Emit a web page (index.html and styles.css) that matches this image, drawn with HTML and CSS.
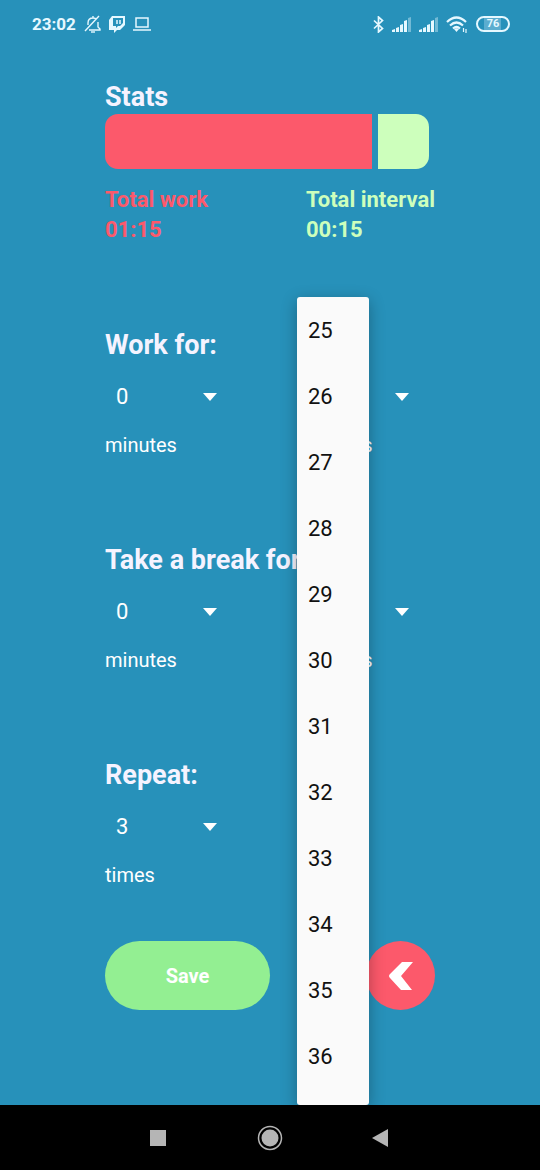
FILE: index.html
```html
<!DOCTYPE html>
<html lang="en">
<head>
<meta charset="utf-8">
<meta name="viewport" content="width=device-width, initial-scale=1">
<title>Interval timer</title>
<link rel="stylesheet" href="styles.css">
</head>
<body>
<div class="screen">
  <header class="status">
    <span class="clock">23:02</span>
    <svg width="17" height="18" viewBox="0 0 17 18" fill="none" stroke="currentColor" stroke-width="1.4" aria-hidden="true"><path d="M1 16 15 1M4 10V8c0-3 2-5 5-5 1 0 2 0 3 1M14 7v5l2 2v1H5M9 1v2"/><path d="M7 17h4"/></svg>
    <svg width="16" height="17" viewBox="0 0 16 17" aria-hidden="true"><path fill="currentColor" fill-rule="evenodd" d="M3 0h13v9l-5 5H8l-3 3v-3H0V4zM4 2v8h3v2l2-2h2l3-3V2z"/><path stroke="currentColor" stroke-width="1.5" d="M8 4v4M11 4v4"/></svg>
    <svg width="18" height="14" viewBox="0 0 18 14" fill="none" stroke="currentColor" stroke-width="1.5" aria-hidden="true"><path d="M3 1h12v9H3zM0 13h18"/></svg>
    <span class="spacer"></span>
    <svg width="11" height="17" viewBox="0 0 11 17" fill="none" stroke="currentColor" stroke-width="1.7" aria-hidden="true"><path d="m1 4.500 8.500 8L5.500 16V1l4 3.500-8.500 8"/></svg>
    <svg width="19" height="15" viewBox="0 0 19 15" fill="currentColor" aria-hidden="true"><path d="M0 13l3-1v3H0zM4 11l3-1v5H4zM8 8l3-1v8H8zM12 4l3-1v12h-3z"/><path opacity=".4" d="M16 1l3-1v15h-3z"/></svg>
    <svg width="19" height="15" viewBox="0 0 19 15" fill="currentColor" aria-hidden="true"><path d="M0 13l3-1v3H0zM4 11l3-1v5H4zM8 8l3-1v8H8zM12 4l3-1v12h-3z"/><path opacity=".4" d="M16 1l3-1v15h-3z"/></svg>
    <svg width="22" height="17" viewBox="0 0 22 17" fill="none" stroke="currentColor" stroke-width="2.2" aria-hidden="true"><path d="M1 6q9.500-9 19 0M4 9.500q6.500-6 13 0M7 12.500q3.500-3 7 0"/><path fill="currentColor" stroke="none" d="m8 13 2.500 3L13 13q-2.500-1.500-5 0"/><path stroke-width="1.200" d="M17.500 12v4M20 13v4"/></svg>
    <span class="battery">76</span>
  </header>

  <main class="content">
    <section>
      <h2 class="title">Stats</h2>
      <div class="bar"><div class="bar-work"></div><div class="bar-rest"></div></div>
      <dl class="legend">
        <div class="work"><dt>Total work</dt><dd>01:15</dd></div>
        <div class="rest"><dt>Total interval</dt><dd>00:15</dd></div>
      </dl>
    </section>

    <section>
      <h2 class="title">Work for:</h2>
      <div class="fields">
        <div class="field">
          <select class="picker" id="work-min"><option>0</option><option>1</option></select>
          <svg class="caret" width="14" height="8" viewBox="0 0 14 8" aria-hidden="true"><path fill="currentColor" d="M0 0h14L7 8z"/></svg>
          <label for="work-min">minutes</label>
        </div>
        <div class="field">
          <select class="picker" id="work-sec"><option>25</option><option>26</option></select>
          <svg class="caret" width="14" height="8" viewBox="0 0 14 8" aria-hidden="true"><path fill="currentColor" d="M0 0h14L7 8z"/></svg>
          <label for="work-sec">seconds</label>
        </div>
      </div>
    </section>

    <section>
      <h2 class="title">Take a break for:</h2>
      <div class="fields">
        <div class="field">
          <select class="picker" id="break-min"><option>0</option><option>1</option></select>
          <svg class="caret" width="14" height="8" viewBox="0 0 14 8" aria-hidden="true"><path fill="currentColor" d="M0 0h14L7 8z"/></svg>
          <label for="break-min">minutes</label>
        </div>
        <div class="field">
          <select class="picker" id="break-sec"><option>5</option><option>6</option></select>
          <svg class="caret" width="14" height="8" viewBox="0 0 14 8" aria-hidden="true"><path fill="currentColor" d="M0 0h14L7 8z"/></svg>
          <label for="break-sec">seconds</label>
        </div>
      </div>
    </section>

    <section>
      <h2 class="title">Repeat:</h2>
      <div class="fields">
        <div class="field">
          <select class="picker" id="repeat"><option>3</option><option>4</option></select>
          <svg class="caret" width="14" height="8" viewBox="0 0 14 8" aria-hidden="true"><path fill="currentColor" d="M0 0h14L7 8z"/></svg>
          <label for="repeat">times</label>
        </div>
      </div>
      <div class="actions">
        <button class="save" type="button">Save</button>
        <button class="back" type="button" aria-label="Back"><svg width="24" height="28" viewBox="0 0 24 28" aria-hidden="true"><path fill="currentColor" d="M13 0h11L12 14l11 14H12L1 16q-2-2 0-4z"/></svg></button>
      </div>
    </section>

    <div class="menu" role="listbox" aria-label="Seconds">
      <button class="item" type="button" role="option">25</button>
      <button class="item" type="button" role="option">26</button>
      <button class="item" type="button" role="option">27</button>
      <button class="item" type="button" role="option">28</button>
      <button class="item" type="button" role="option">29</button>
      <button class="item" type="button" role="option">30</button>
      <button class="item" type="button" role="option">31</button>
      <button class="item" type="button" role="option">32</button>
      <button class="item" type="button" role="option">33</button>
      <button class="item" type="button" role="option">34</button>
      <button class="item" type="button" role="option">35</button>
      <button class="item" type="button" role="option">36</button>
    </div>
  </main>

  <nav class="navbar">
    <button class="key" type="button" aria-label="Recent apps"><svg width="26" height="26" viewBox="0 0 26 26"><path fill="currentColor" d="M5 5h16v16H5z"/></svg></button>
    <button class="key" type="button" aria-label="Home"><svg width="26" height="26" viewBox="0 0 26 26"><circle cx="13" cy="13" r="11.500" fill="none" stroke="currentColor" stroke-width="1.500"/><circle cx="13" cy="13" r="8.500" fill="currentColor"/></svg></button>
    <button class="key" type="button" aria-label="Back"><svg width="26" height="26" viewBox="0 0 26 26"><path fill="currentColor" d="M3 13 19 4v18z"/></svg></button>
  </nav>
</div>
</body>
</html>
```
FILE: styles.css
```css
* {
  box-sizing: border-box;
}

body {
  margin: 0;
  background: #2791ba;
  color: #fff;
  font-family: Roboto, sans-serif;
}

button,
select {
  border: 0;
  padding: 0;
  background: none;
  color: inherit;
  font: inherit;
}

.screen {
  display: flex;
  flex-direction: column;
  min-height: 100vh;
}

.status {
  display: flex;
  align-items: center;
  gap: 8px;
  height: 48px;
  padding: 0 30px 0 32px;
  color: #e6f8ff;
}

.clock {
  font-size: 17px;
  font-weight: 700;
}

.spacer {
  flex: 1;
}

.battery {
  width: 34px;
  border: 2px solid;
  border-radius: 8px;
  background: linear-gradient(90deg, transparent 20%, #5badcf 20%, #5badcf 76%, transparent 76%);
  font-size: 11px;
  font-weight: 700;
  line-height: 12px;
  text-align: center;
}

.content {
  position: relative;
  flex: 1;
  display: flex;
  flex-direction: column;
  gap: 84px;
  padding: 33px calc(50% - 165px) 30px;
}

.title {
  margin: 0;
  color: #f5f3ff;
  font-size: 27px;
  font-weight: 700;
  line-height: 33px;
  white-space: nowrap;
}

.bar {
  display: flex;
  gap: 6px;
  height: 55px;
  margin-right: 6px;
  border-radius: 13px;
  overflow: hidden;
}

.bar-work {
  flex: 267;
  background: #fc596b;
}

.bar-rest {
  flex: 51;
  background: #cdffbc;
}

.legend {
  display: flex;
  justify-content: space-between;
  margin: 16px 0 0;
  font-size: 22px;
  font-weight: 700;
  line-height: 30px;
}

.legend dd {
  margin: 0;
}

.work {
  color: #fc596b;
}

.rest {
  color: #cdffbc;
}

.fields {
  display: grid;
  grid-template-columns: 132px 132px;
  gap: 60px;
}

.field {
  display: grid;
  grid-template: 69px 29px / 1fr;
  font-size: 20px;
  line-height: 28px;
}

.picker {
  grid-area: 1 / 1;
  appearance: none;
  padding: 0 11px;
  font-size: 22px;
}

.picker option {
  color: #000;
}

.caret {
  grid-area: 1 / 1;
  place-self: center end;
  margin-right: 20px;
  pointer-events: none;
}

.actions {
  display: flex;
  justify-content: space-between;
  height: 69px;
  margin-top: 51px;
}

.save {
  width: 50%;
  border-radius: 35px;
  background: #93ef92;
  font-size: 20px;
  font-weight: 700;
}

.back {
  display: grid;
  place-items: center;
  width: 69px;
  border-radius: 50%;
  background: #fc596b;
}

.menu {
  position: absolute;
  top: 249px;
  bottom: 0;
  left: calc(50% + 27px);
  display: flex;
  flex-direction: column;
  width: 72px;
  border-radius: 3px;
  background: #fafafa;
  box-shadow: 0 4px 16px rgb(0 0 0 / 30%);
  color: #111;
}

.item {
  height: 66px;
  padding-left: 11px;
  font-size: 22px;
  text-align: left;
}

.navbar {
  position: relative;
  display: flex;
  align-items: center;
  justify-content: center;
  gap: 86px;
  height: 65px;
  background: #000;
  color: #b5b5b5;
}

.key {
  display: flex;
}
```
